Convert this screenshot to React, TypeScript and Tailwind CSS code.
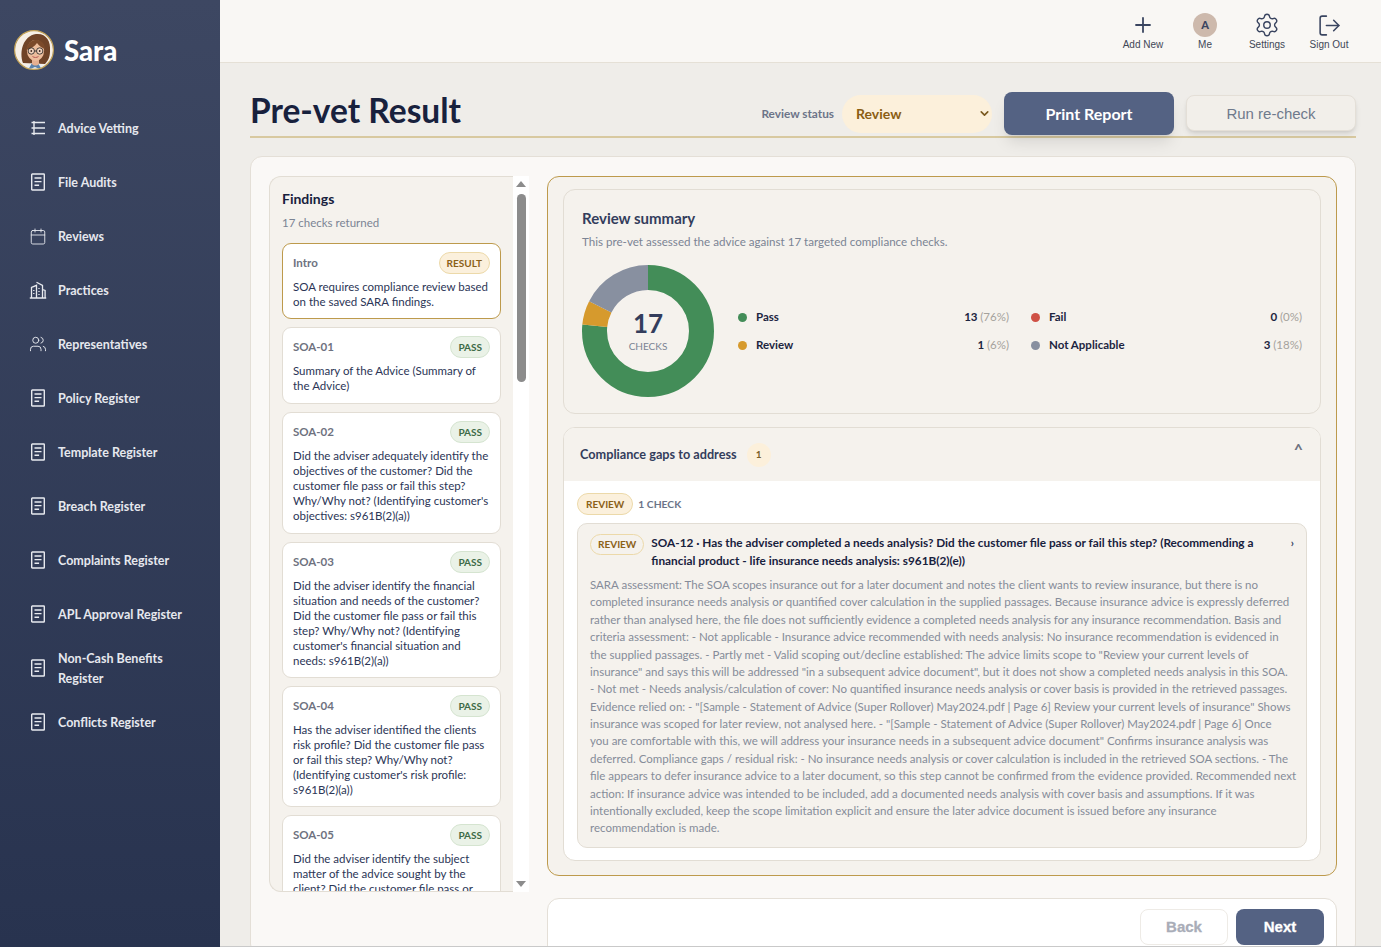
import React from "react";
import { Plus, Settings, LogOut, Calendar, Users, ChevronDown } from "lucide-react";

const FONT = "font-['Lato','Noto_Sans',sans-serif]";

function DocIcon() {
  return (
    <svg width="16" height="18" viewBox="0 0 16 18" fill="none" stroke="currentColor" strokeWidth="1.4">
      <rect x="1.7" y="1" width="12.6" height="16" rx="0.6" />
      <path d="M4.5 5h7M4.5 8.6h7M4.5 12.2h4.6" />
    </svg>
  );
}
function TreeIcon() {
  return (
    <svg width="16" height="16" viewBox="0 0 16 16" fill="none" stroke="currentColor" strokeWidth="1.4">
      <path d="M1.5 2.5h13.5M1.5 8h13.5M1.5 13.5h13.5M4 1v14" />
    </svg>
  );
}
function BuildingIcon() {
  return (
    <svg width="18" height="18" viewBox="0 0 18 18" fill="none" stroke="currentColor" strokeWidth="1.3">
      <path d="M0.8 17h16.4M2.5 17V6.5l5-2.2V17M7.5 1.2l6 3.2V17M13.5 8.5l2.6 1V17" />
      <path d="M10 7v1M10 10v1M10 13v1M4.8 9v1M4.8 12v1" />
    </svg>
  );
}
function Avatar() {
  return (
    <svg width="40" height="40" viewBox="0 0 40 40" className="shrink-0">
      <defs>
        <clipPath id="av"><circle cx="20" cy="20" r="19.2" /></clipPath>
      </defs>
      <g clipPath="url(#av)">
        <rect width="40" height="40" fill="#f6efe6" />
        <path d="M9 33C5 22 9 6 22 4c10-1 15 7 14 17 0 6-2 10-5 13z" fill="#6f4327" />
        <path d="M11 40c1-5 5-7 10-7s9 2 10 7z" fill="#e9eef3" />
        <path d="M14 40l4-7h6l4 7-7-3z" fill="#5c83ab" />
        <path d="M18 29h7v5c-2 2-5 2-7 0z" fill="#e6b090" />
        <ellipse cx="21.5" cy="20.5" rx="8.6" ry="10.5" fill="#edbd9c" />
        <path d="M12 20c1-7 7-11 12-10 4 1 7 4 7 9-3-1-6-3-8-6-2 3-6 6-11 7z" fill="#7b4a2a" />
        <circle cx="17.3" cy="21" r="3.2" fill="#fff" fillOpacity=".35" stroke="#33302e" strokeWidth="0.9" />
        <circle cx="25.7" cy="21" r="3.2" fill="#fff" fillOpacity=".35" stroke="#33302e" strokeWidth="0.9" />
        <path d="M20.5 21h2" stroke="#33302e" strokeWidth="0.9" />
        <circle cx="17.3" cy="21" r="0.9" fill="#402a1f" />
        <circle cx="25.7" cy="21" r="0.9" fill="#402a1f" />
        <path d="M18.5 26.5c1.8 1.3 4.2 1.3 6 0" stroke="#b85b55" strokeWidth="1" fill="none" />
      </g>
      <circle cx="20" cy="20" r="19.4" fill="none" stroke="#c5a458" strokeWidth="1.2" />
    </svg>
  );
}

const nav: [React.ReactNode, React.ReactNode][] = [
  [<TreeIcon />, "Advice Vetting"],
  [<DocIcon />, "File Audits"],
  [<Calendar size={21} strokeWidth={1.2} />, "Reviews"],
  [<BuildingIcon />, "Practices"],
  [<Users size={22} strokeWidth={1.25} />, "Representatives"],
  [<DocIcon />, "Policy Register"],
  [<DocIcon />, "Template Register"],
  [<DocIcon />, "Breach Register"],
  [<DocIcon />, "Complaints Register"],
  [<DocIcon />, "APL Approval Register"],
  [<DocIcon />, <>Non-Cash Benefits<br />Register</>],
  [<DocIcon />, "Conflicts Register"],
];

const findings: { id: string; tag: string; h: string; lines: string[] }[] = [
  { id: "Intro", tag: "RESULT", h: "h-[76px]", lines: ["SOA requires compliance review based", "on the saved SARA findings."] },
  { id: "SOA-01", tag: "PASS", h: "h-[77px]", lines: ["Summary of the Advice (Summary of", "the Advice)"] },
  { id: "SOA-02", tag: "PASS", h: "h-[122px]", lines: ["Did the adviser adequately identify the", "objectives of the customer? Did the", "customer file pass or fail this step?", "Why/Why not? (Identifying customer's", "objectives: s961B(2)(a))"] },
  { id: "SOA-03", tag: "PASS", h: "h-[136px]", lines: ["Did the adviser identify the financial", "situation and needs of the customer?", "Did the customer file pass or fail this", "step? Why/Why not? (Identifying", "customer's financial situation and", "needs: s961B(2)(a))"] },
  { id: "SOA-04", tag: "PASS", h: "h-[121px]", lines: ["Has the adviser identified the clients", "risk profile? Did the customer file pass", "or fail this step? Why/Why not?", "(Identifying customer's risk profile:", "s961B(2)(a))"] },
  { id: "SOA-05", tag: "PASS", h: "h-[121px]", lines: ["Did the adviser identify the subject", "matter of the advice sought by the", "client? Did the customer file pass or", "fail this step?"] },
];

const body = [
  "SARA assessment: The SOA scopes insurance out for a later document and notes the client wants to review insurance, but there is no",
  "completed insurance needs analysis or quantified cover calculation in the supplied passages. Because insurance advice is expressly deferred",
  "rather than analysed here, the file does not sufficiently evidence a completed needs analysis for any insurance recommendation. Basis and",
  "criteria assessment: - Not applicable - Insurance advice recommended with needs analysis: No insurance recommendation is evidenced in",
  "the supplied passages. - Partly met - Valid scoping out/decline established: The advice limits scope to \"Review your current levels of",
  "insurance\" and says this will be addressed \"in a subsequent advice document\", but it does not show a completed needs analysis in this SOA.",
  "- Not met - Needs analysis/calculation of cover: No quantified insurance needs analysis or cover basis is provided in the retrieved passages.",
  "Evidence relied on: - \"[Sample - Statement of Advice (Super Rollover) May2024.pdf | Page 6] Review your current levels of insurance\" Shows",
  "insurance was scoped for later review, not analysed here. - \"[Sample - Statement of Advice (Super Rollover) May2024.pdf | Page 6] Once",
  "you are comfortable with this, we will address your insurance needs in a subsequent advice document\" Confirms insurance analysis was",
  "deferred. Compliance gaps / residual risk: - No insurance needs analysis or cover calculation is included in the retrieved SOA sections. - The",
  "file appears to defer insurance advice to a later document, so this step cannot be confirmed from the evidence provided. Recommended next",
  "action: If insurance advice was intended to be included, add a documented needs analysis with cover basis and assumptions. If it was",
  "intentionally excluded, keep the scope limitation explicit and ensure the later advice document is issued before any insurance",
  "recommendation is made.",
];

function Legend({ color, label, n, pct }: { color: string; label: string; n: string; pct: string }) {
  return (
    <div className="flex items-center h-[28px]">
      <span className="w-[9px] h-[9px] rounded-full mr-[9px]" style={{ background: color }} />
      <span className="font-bold text-[#1c2540] text-[11.5px]">{label}</span>
      <span className="ml-auto text-[11.5px] font-bold text-[#1c2540]">
        {n} <span className="font-normal text-[#a5a29c]">{pct}</span>
      </span>
    </div>
  );
}

function Top({ icon, label }: { icon: React.ReactNode; label: string }) {
  return (
    <div className="w-[62px] flex flex-col items-center text-[#3a4560]">
      <div className="h-[24px] flex items-center justify-center">{icon}</div>
      <div className="mt-[1px] text-[10px] font-['Liberation_Sans',sans-serif] text-[#3f4757] leading-[14px]">{label}</div>
    </div>
  );
}

export default function App() {
  const C = 2 * Math.PI * 53.5;
  return (
    <div className={`flex h-[947px] w-[1381px] overflow-hidden bg-[#efede9] ${FONT}`}>
      <aside className="w-[220px] shrink-0 bg-gradient-to-b from-[#3d4762] to-[#28334f] text-[#eef0f4]">
        <div className="flex items-center h-[100px] pl-[14px] gap-[10px]">
          <Avatar />
          <span className="text-[27.5px] font-black text-white leading-none mt-[1px]">Sara</span>
        </div>
        {nav.map(([icon, label], i) => (
          <div key={i} className="flex items-center h-[54px] pl-[29px]">
            <span className="w-[18px] h-[22px] mt-[2px] flex items-center justify-center text-[#e8eaef]">{icon}</span>
            <span className="ml-[11px] mt-[3px] text-[12.5px] font-bold leading-[20px] text-[#e6e8ee]">{label}</span>
          </div>
        ))}
      </aside>

      <div className="flex-1 min-w-0 flex flex-col border-b border-[#c9c9c9]">
        <header className="h-[63px] shrink-0 bg-[#f9f7f4] border-b border-[#e5e0d6] flex justify-end items-start pt-[13px] pr-[21px]">
          <Top icon={<Plus size={24} strokeWidth={1.8} />} label="Add New" />
          <Top icon={<span className="w-[24px] h-[24px] rounded-full bg-[#cdb9ac] flex items-center justify-center text-[11px] font-black text-[#3a4560]">A</span>} label="Me" />
          <Top icon={<Settings size={26} strokeWidth={1.3} />} label="Settings" />
          <Top icon={<LogOut size={25} strokeWidth={1.5} />} label="Sign Out" />
        </header>

        <main className="flex-1 min-h-0 overflow-hidden pl-[30px] pr-[25px] pt-[28px]">
          <div className="flex items-center h-[47px] border-b-2 border-[#d8c9a0]">
            <h1 className="text-[33.5px] font-bold text-[#18213d] leading-none mb-[6px] whitespace-nowrap">Pre-vet Result</h1>
            <span className="ml-auto text-[11.8px] font-bold text-[#6c7488]">Review status</span>
            <div className="ml-[8px] w-[150px] h-[38px] rounded-[19px] bg-[#fcf0db] flex items-center pl-[14px] pr-[3px] pb-[1px] text-[14px] font-bold text-[#8b5e13]">
              Review
              <ChevronDown size={13} strokeWidth={3} className="ml-auto mr-[-2px] text-[#7a5a20]" />
            </div>
            <button className="ml-[12px] w-[170px] h-[43px] rounded-[8px] bg-[#546283] text-white text-[16px] font-bold shadow-lg">Print Report</button>
            <button className="ml-[12px] mt-[-2px] pt-[3px] w-[170px] h-[36px] rounded-[8px] bg-[#f2efea] border border-[#e4dfd7] text-[#6f7a8c] text-[15px] font-['Liberation_Sans',sans-serif] shadow-md">Run re-check</button>
          </div>

          <div className="mt-[18px] h-[800px] bg-[#faf8f6] border border-[#e4dfd7] rounded-[12px] pt-[19px] pl-[18px] pr-[18px] flex gap-[18px]">
            <div className="w-[260px] h-[716px] shrink-0 flex">
              <div className="w-[244px] h-full bg-[#f5f2ed] border border-[#e2ddd4] border-r-0 rounded-l-[12px] overflow-hidden px-[12px] pt-[13px]">
                <div className="text-[14px] font-bold text-[#18213d] leading-[18px]">Findings</div>
                <div className="mt-[7px] text-[11.5px] text-[#7b8494] leading-[16px]">17 checks returned</div>
                <div className="mt-[12px] flex flex-col gap-[8px]">
                  {findings.map((f) => {
                    const res = f.tag === "RESULT";
                    return (
                      <div key={f.id} className={`${f.h} shrink-0 bg-white rounded-[9px] border px-[10px] pt-[8px] ${res ? "border-[#bd9a4c]" : "border-[#e2ddd4]"}`}>
                        <div className="flex items-center justify-between h-[22px]">
                          <span className="text-[11.5px] font-bold text-[#6e7280]">{f.id}</span>
                          <span className={`h-[22px] rounded-full border text-[10px] font-bold flex items-center ${res ? "px-[7px] bg-[#fbf0dc] border-[#ecd9a9] text-[#8b6118]" : "px-[7px] bg-[#eaf2e7] border-[#d5e4d0] text-[#3d6a46]"}`}>{f.tag}</span>
                        </div>
                        <div className="mt-[5px] text-[#2b3556] text-[11.5px] leading-[15px] whitespace-nowrap">
                          {f.lines.map((l) => <div key={l}>{l}</div>)}
                        </div>
                      </div>
                    );
                  })}
                </div>
              </div>
              <div className="w-[16px] h-full bg-white flex flex-col items-center">
                <div className="mt-[5px] w-0 h-0 border-x-[5px] border-x-transparent border-b-[6px] border-b-[#8c8c8c]" />
                <div className="mt-[7px] w-[9px] h-[188px] rounded-full bg-[#8c8c8c]" />
                <div className="mt-auto mb-[5px] w-0 h-0 border-x-[5px] border-x-transparent border-t-[6px] border-t-[#8c8c8c]" />
              </div>
            </div>

            <div className="flex-1 min-w-0">
              <section className="h-[700px] bg-[#f5f2ed] border border-[#bd9a4c] rounded-[12px] px-[15px] pt-[12px]">
                <div className="h-[225px] border border-[#e2ddd4] rounded-[12px] px-[18px] pt-[19px]">
                  <div className="text-[15px] font-bold text-[#333d5c] leading-[18px]">Review summary</div>
                  <div className="mt-[7px] text-[11.6px] text-[#7b8494] leading-[16px]">This pre-vet assessed the advice against 17 targeted compliance checks.</div>
                  <div className="mt-[15px] flex items-center">
                    <div className="relative w-[132px] h-[132px] shrink-0">
                      <svg width="132" height="132" viewBox="0 0 132 132" className="-rotate-90">
                        <circle cx="66" cy="66" r="53.5" fill="none" stroke="#438d58" strokeWidth="25" strokeDasharray={`${C * 0.7647} ${C}`} />
                        <circle cx="66" cy="66" r="53.5" fill="none" stroke="#d69a2d" strokeWidth="25" strokeDasharray={`${C * 0.0588} ${C}`} strokeDashoffset={-C * 0.7647} />
                        <circle cx="66" cy="66" r="53.5" fill="none" stroke="#8890a0" strokeWidth="25" strokeDasharray={`${C * 0.1765} ${C}`} strokeDashoffset={-C * 0.8235} />
                      </svg>
                      <div className="absolute inset-0 flex flex-col items-center justify-center">
                        <div className="text-[26px] font-bold text-[#333d5c] leading-[30px] mt-[-2px]">17</div>
                        <div className="text-[10px] text-[#7b8494] leading-[14px] mt-[1px]">CHECKS</div>
                      </div>
                    </div>
                    <div className="ml-[24px] flex-1 grid grid-cols-2 gap-x-[22px]">
                      <Legend color="#438d58" label="Pass" n="13" pct="(76%)" />
                      <Legend color="#cf5145" label="Fail" n="0" pct="(0%)" />
                      <Legend color="#d69a2d" label="Review" n="1" pct="(6%)" />
                      <Legend color="#8890a0" label="Not Applicable" n="3" pct="(18%)" />
                    </div>
                  </div>
                </div>

                <div className="mt-[13px] h-[434px] border border-[#e2ddd4] rounded-[12px] overflow-hidden bg-white">
                  <div className="h-[53px] bg-[#f5f2ed] flex items-center pl-[16px] pr-[17px]">
                    <span className="text-[12.7px] font-bold text-[#333d5c]">Compliance gaps to address</span>
                    <span className="ml-[10px] w-[24px] h-[24px] rounded-full bg-[#fcf0db] flex items-center justify-center text-[10px] font-bold text-[#7a5f28]">1</span>
                    <span className="ml-auto mb-[12px] text-[16px] font-bold text-[#6e7280] leading-none">^</span>
                  </div>
                  <div className="px-[13px] pt-[12px]">
                    <div className="flex items-center h-[22px]">
                      <span className="h-[22px] px-[8px] rounded-full bg-[#fbf0dc] border border-[#ecd9a9] text-[10px] font-bold text-[#8b6118] flex items-center">REVIEW</span>
                      <span className="ml-[5px] mt-[1px] text-[10.3px] font-bold text-[#6c7488]">1 CHECK</span>
                    </div>
                    <div className="mt-[8px] h-[325px] bg-[#f5f2ed] border border-[#e2ddd4] rounded-[10px] px-[12px] pt-[10px]">
                      <div className="flex items-start">
                        <span className="shrink-0 h-[21px] px-[7px] rounded-full border border-[#ecd9a9] text-[10px] font-bold text-[#8b6118] flex items-center">REVIEW</span>
                        <div className="ml-[7px] text-[11.8px] font-bold text-[#18213d] leading-[18px] whitespace-nowrap">
                          SOA-12 · Has the adviser completed a needs analysis? Did the customer file pass or fail this step? (Recommending a<br />
                          financial product - life insurance needs analysis: s961B(2)(e))
                        </div>
                        <span className="ml-auto text-[11px] font-bold text-[#333d5c] leading-[18px]">›</span>
                      </div>
                      <div className="mt-[6px] text-[11.5px] leading-[17.37px] text-[#858c99] whitespace-nowrap">
                        {body.map((l) => <div key={l}>{l}</div>)}
                      </div>
                    </div>
                  </div>
                </div>
              </section>

              <div className="mt-[22px] h-[90px] bg-white border border-[#e4dfd7] rounded-[12px] flex items-start justify-end gap-[8px] pt-[10px] pr-[12px]">
                <button className="w-[88px] h-[36px] rounded-[8px] bg-white border border-[#eeebe6] text-[#a9adb8] text-[15px] font-bold font-['Liberation_Sans',sans-serif] [-webkit-text-stroke:0.3px_#a9adb8]">Back</button>
                <button className="w-[88px] h-[36px] rounded-[8px] bg-[#546283] text-white text-[15px] font-bold font-['Liberation_Sans',sans-serif] [-webkit-text-stroke:0.3px_#ffffff]">Next</button>
              </div>
            </div>
          </div>
        </main>
      </div>
    </div>
  );
}
